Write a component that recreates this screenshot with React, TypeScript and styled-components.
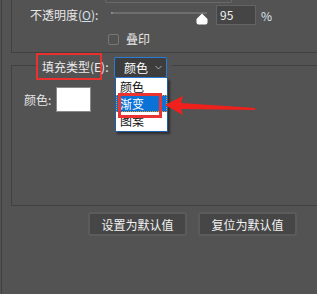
import styled, { createGlobalStyle } from 'styled-components';

const GlobalStyle = createGlobalStyle`
  html, body {
    margin: 0;
    padding: 0;
    background: #535353;
  }
  body {
    font-family: "Noto Sans CJK SC", "Liberation Sans", sans-serif;
    font-size: 12px;
    color: #e6e6e6;
  }
`;

const Root = styled.div`
  width: 317px;
  height: 294px;
  padding-left: 1px;
  box-sizing: border-box;
  background: #535353;
  overflow: hidden;
`;

const Frame = styled.div`
  height: 100%;
  border-left: 1px solid #3f3f3f;
  display: flex;
  flex-direction: column;
`;

const TopGroup = styled.div`
  margin-left: 9px;
  height: 53px;
  box-sizing: border-box;
  border-left: 1px solid #414141;
  border-bottom: 1px solid #414141;
  display: flex;
  flex-direction: column;
`;

const StubInput = styled.div`
  margin-left: 93px;
  width: 127px;
  height: 3px;
  box-sizing: border-box;
  border: 1px solid #6a6a6a;
  border-top: none;
  border-radius: 0 0 2px 2px;
`;

const Row = styled.div<{ $top?: number; $left?: number }>`
  display: flex;
  align-items: center;
  margin-top: ${({ $top }) => $top ?? 0}px;
  padding-left: ${({ $left }) => $left ?? 0}px;
  white-space: nowrap;
`;

const FieldLabel = styled.span<{ $width?: number }>`
  width: ${({ $width }) => ($width ? `${$width}px` : 'auto')};
  line-height: 16px;
  color: #e6e6e6;
  flex-shrink: 0;

  u {
    text-decoration: underline;
    color: #cfe0f0;
  }
`;

const Slider = styled.div`
  position: relative;
  width: 98px;
  height: 20px;
`;

const Track = styled.div`
  position: absolute;
  left: 0;
  right: 2px;
  top: 7px;
  height: 2px;
  background: #6e6e6e;

  &::before {
    content: '';
    position: absolute;
    left: 0;
    top: 0;
    width: 2px;
    height: 2px;
    background: #8a8a8a;
  }
`;

const Thumb = styled.svg`
  position: absolute;
  left: 85px;
  top: 8px;
`;

const NumberBox = styled.div`
  margin-left: 7px;
  width: 40px;
  height: 20px;
  box-sizing: border-box;
  background: #454545;
  border: 1px solid #636363;
  padding-left: 3px;
  line-height: 18px;
  color: #f0f0f0;
`;

const Percent = styled.span`
  margin-left: 5px;
  color: #dce6f0;
`;

const CheckBox = styled.span`
  width: 11px;
  height: 11px;
  box-sizing: border-box;
  border: 1px solid #777;
  border-radius: 2px;
  margin-right: 7px;
`;

const FillGroup = styled.div`
  position: relative;
  margin-left: 9px;
  margin-top: 12px;
  height: 141px;
  box-sizing: border-box;
  border: 1px solid #414141;
  border-right: none;
  display: flex;
  flex-direction: column;
`;

const Header = styled.div`
  margin-top: -13px;
  margin-left: 24px;
  width: 136px;
  height: 27px;
  background: #535353;
  display: flex;
  align-items: flex-start;
`;

const LabelBox = styled.div`
  width: 66px;
  height: 27px;
  box-sizing: border-box;
  border: 2px solid #e9312f;
  padding-left: 4px;
  line-height: 23px;
  white-space: nowrap;
  overflow: visible;
  color: #ececec;
`;

const SelectWrap = styled.div`
  position: relative;
  margin-left: 12px;
  margin-top: 4px;
`;

const Select = styled.div`
  width: 53px;
  height: 21px;
  box-sizing: border-box;
  border: 1px solid #2a7bd6;
  border-radius: 2px;
  background: #3d3d3d;
  display: flex;
  align-items: center;
  justify-content: space-between;
  padding: 0 4px 0 9px;
  color: #ffffff;
  line-height: 19px;
`;

const DropList = styled.div`
  position: absolute;
  left: 1px;
  top: 21px;
  width: 53px;
  height: 54px;
  box-sizing: border-box;
  background: #ffffff;
  border: 1px solid #1c5fa8;
  border-top: none;
  box-shadow: 2px 2px 2px rgba(0, 0, 0, 0.45);
  overflow: hidden;
  z-index: 2;
`;

const Option = styled.div<{ $active?: boolean }>`
  height: 17px;
  padding-left: 3px;
  box-sizing: border-box;
  color: ${({ $active }) => ($active ? '#ffffff' : '#111111')};
  background: ${({ $active }) => ($active ? '#0a72d6' : 'transparent')};
  border: 1px dotted ${({ $active }) => ($active ? '#f39a1c' : 'transparent')};
  line-height: 15px;
`;

const OptionMark = styled.div`
  position: absolute;
  left: 4px;
  top: 36px;
  width: 44px;
  height: 25px;
  box-sizing: border-box;
  border: 3px solid #ea3433;
  z-index: 3;
`;

const Arrow = styled.svg`
  position: absolute;
  left: 152px;
  top: 29px;
  z-index: 3;
`;

const Swatch = styled.div`
  margin-left: 5px;
  width: 35px;
  height: 25px;
  box-sizing: border-box;
  background: #ffffff;
  border: 1px solid #8a8a8a;
`;

const ButtonRow = styled.div`
  display: flex;
  gap: 11px;
  margin-top: 6px;
  margin-left: 86px;
`;

const Button = styled.div`
  width: 99px;
  height: 24px;
  box-sizing: border-box;
  background: #464646;
  border: 2px solid #5b5b5b;
  border-radius: 3px;
  display: flex;
  align-items: center;
  justify-content: center;
  color: #f2f2f2;
`;

const fillTypes = ['颜色', '渐变', '图案'];

const App = () => (
  <>
    <GlobalStyle />
    <Root>
      <Frame>
        <TopGroup>
          <StubInput />
          <Row $top={2} $left={18}>
            <FieldLabel $width={81}>
              不透明度(<u>O</u>):
            </FieldLabel>
            <Slider>
              <Track />
              <Thumb width="12" height="12" viewBox="0 0 12 12">
                <path d="M6 0.5 L11.5 6 L11.5 9.5 Q11.5 11.5 9.5 11.5 L2.5 11.5 Q0.5 11.5 0.5 9.5 L0.5 6 Z" fill="#ffffff" />
              </Thumb>
            </Slider>
            <NumberBox>95</NumberBox>
            <Percent>%</Percent>
          </Row>
          <Row $top={6} $left={96}>
            <CheckBox />
            <FieldLabel>叠印</FieldLabel>
          </Row>
        </TopGroup>

        <FillGroup>
          <Header>
            <LabelBox>填充类型(E):</LabelBox>
            <SelectWrap>
              <Select>
                <span>颜色</span>
                <svg width="7" height="5" viewBox="0 0 7 5">
                  <polyline points="0.5,1 3.5,4 6.5,1" fill="none" stroke="#a8a8a8" strokeWidth="1" />
                </svg>
              </Select>
              <DropList>
                {fillTypes.map((t) => (
                  <Option key={t} $active={t === '渐变'}>
                    {t}
                  </Option>
                ))}
              </DropList>
              <OptionMark />
            </SelectWrap>
          </Header>
          <Arrow width="92" height="24" viewBox="0 0 92 24">
            <path d="M1 10 L19 1 L17 8 L91 13 L91 15 L17 14 L19 20 Z" fill="#f0201c" />
          </Arrow>
          <Row $top={7} $left={12}>
            <FieldLabel>颜色:</FieldLabel>
            <Swatch />
          </Row>
        </FillGroup>

        <ButtonRow>
          <Button>设置为默认值</Button>
          <Button>复位为默认值</Button>
        </ButtonRow>
      </Frame>
    </Root>
  </>
);

export default App;
